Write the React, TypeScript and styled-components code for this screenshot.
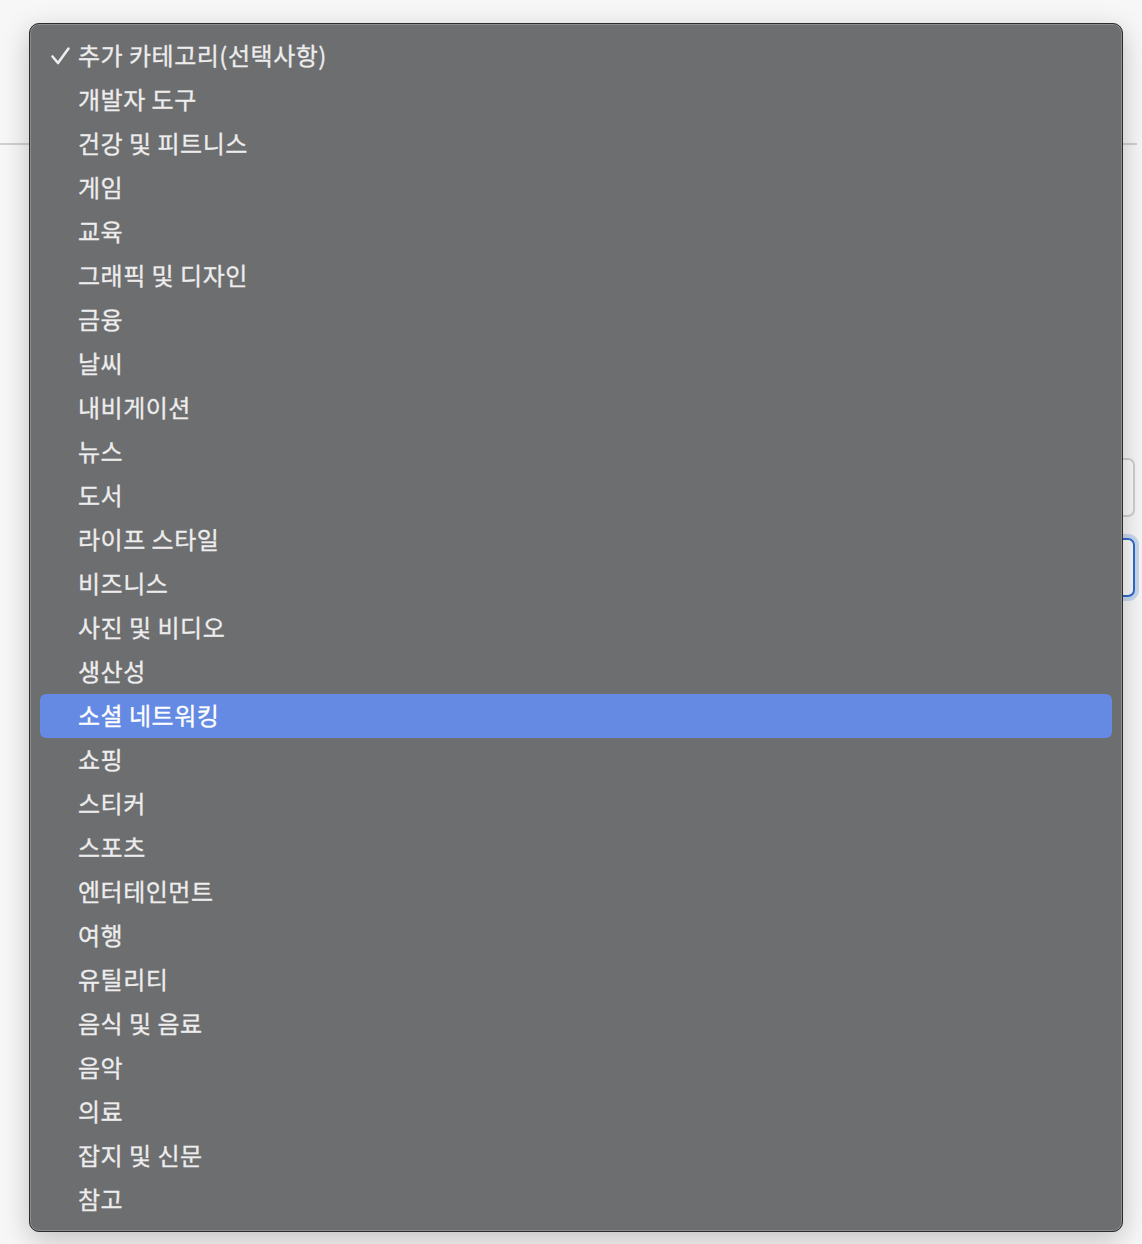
import React from "react";
import styled, { createGlobalStyle } from "styled-components";

const GlobalStyle = createGlobalStyle`
  html, body { margin: 0; padding: 0; }
  body {
    background: #f7f7f7;
    font-family: "Noto Sans CJK KR", "Noto Sans", sans-serif;
    width: 1142px;
    height: 1244px;
    overflow: hidden;
  }
`;

const Page = styled.div`
  position: relative;
  width: 1142px;
  height: 1244px;
  background: #f7f7f7;
`;

const Header = styled.div`
  height: 145px;
  width: 1137px;
  border-bottom: 2px solid #cfcfcf;
  box-sizing: border-box;
`;

const Form = styled.div`
  display: flex;
  flex-direction: column;
  gap: 21px;
  padding: 313px 7px 0 600px;
`;

const Field = styled.div<{ $focused?: boolean }>`
  height: 59px;
  box-sizing: border-box;
  border-radius: 7px;
  background: #fafafa;
  border: ${(p) => (p.$focused ? "2px solid #2f6bd0" : "2px solid #cfcfcf")};
  box-shadow: ${(p) => (p.$focused ? "0 0 0 4px #c9d8ee" : "none")};
`;

const Menu = styled.div`
  position: absolute;
  left: 29px;
  top: 23px;
  width: 1094px;
  box-sizing: border-box;
  background: #6d6e70;
  border: 1px solid #2b2b2b;
  border-radius: 10px;
  box-shadow: inset 0 0 0 1px #8c8d8f, 0 8px 28px rgba(0, 0, 0, 0.22);
  padding: 10px 10px 9px;
  display: flex;
  flex-direction: column;
`;

const Row = styled.div<{ $active?: boolean }>`
  height: 44px;
  box-sizing: border-box;
  display: flex;
  align-items: center;
  border-radius: 6px;
  padding: 0 0 3px 38px;
  position: relative;
  background: ${(p) => (p.$active ? "#648ae4" : "transparent")};
  color: ${(p) => (p.$active ? "#ffffff" : "#ededed")};
  font-size: 24px;
  line-height: 1;
  letter-spacing: 0.5px;
  -webkit-text-stroke: 0.3px currentColor;
`;

const Check = styled.span`
  position: absolute;
  left: 10px;
  top: 50%;
  transform: translateY(-50%);
  display: flex;
`;

const items = [
  "추가 카테고리(선택사항)",
  "개발자 도구",
  "건강 및 피트니스",
  "게임",
  "교육",
  "그래픽 및 디자인",
  "금융",
  "날씨",
  "내비게이션",
  "뉴스",
  "도서",
  "라이프 스타일",
  "비즈니스",
  "사진 및 비디오",
  "생산성",
  "소셜 네트워킹",
  "쇼핑",
  "스티커",
  "스포츠",
  "엔터테인먼트",
  "여행",
  "유틸리티",
  "음식 및 음료",
  "음악",
  "의료",
  "잡지 및 신문",
  "참고",
];

export default function App() {
  return (
    <Page>
      <GlobalStyle />
      <Header />
      <Form>
        <Field />
        <Field $focused />
      </Form>
      <Menu>
        {items.map((t, i) => (
          <Row key={t} $active={t === "소셜 네트워킹"}>
            {i === 0 && (
              <Check>
                <svg width="21" height="20" viewBox="0 0 21 20">
                  <path
                    d="M2.5 10.5 L8 17 L18.5 2.5"
                    fill="none"
                    stroke="#ededed"
                    strokeWidth="2.6"
                    strokeLinecap="round"
                    strokeLinejoin="round"
                  />
                </svg>
              </Check>
            )}
            {t}
          </Row>
        ))}
      </Menu>
    </Page>
  );
}
